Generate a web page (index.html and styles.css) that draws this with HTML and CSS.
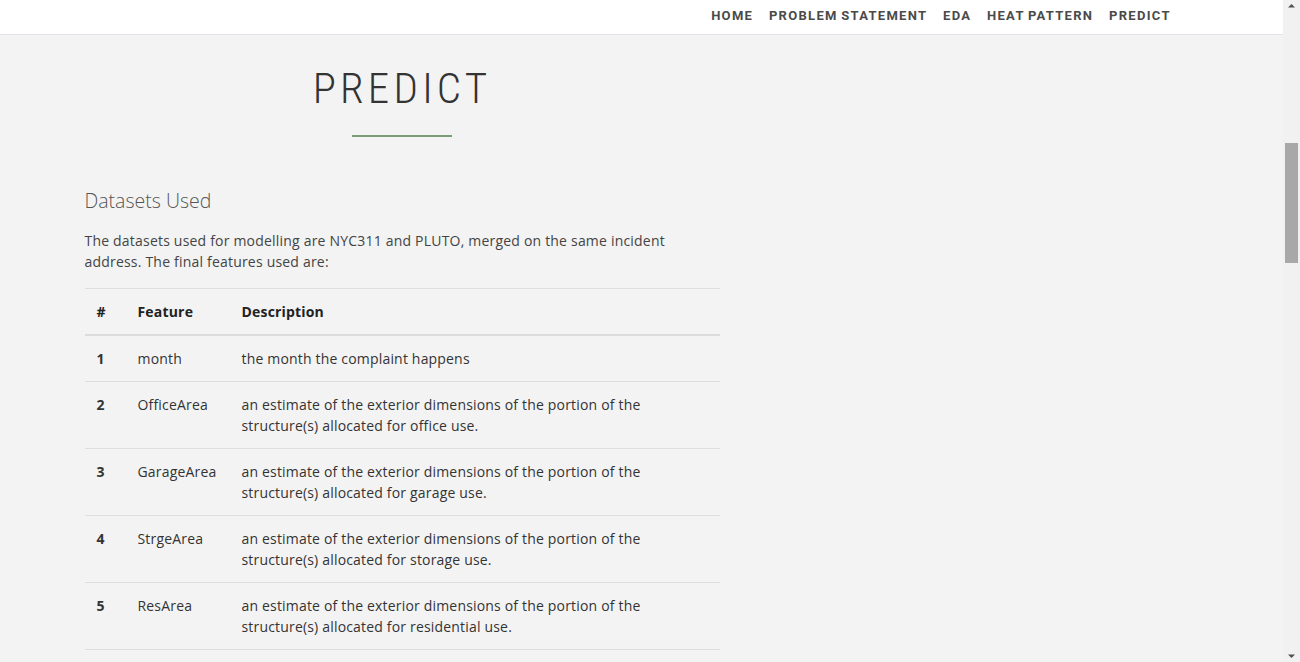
FILE: index.html
```html
<!DOCTYPE html>
<html lang="en">
<head>
<meta charset="utf-8">
<title>Predict</title>
<link rel="stylesheet" href="styles.css">
</head>
<body>
<div class="frame">
<div class="viewport">
<nav class="topnav">
  <div class="nav-inner">
    <a class="nav-link" href="#home">Home</a>
    <a class="nav-link" href="#problem">Problem Statement</a>
    <a class="nav-link" href="#eda">EDA</a>
    <a class="nav-link" href="#heat">Heat Pattern</a>
    <a class="nav-link" href="#predict">Predict</a>
  </div>
</nav>
<main class="page">
  <section class="section" id="predict">
    <div class="col">
      <header class="section-head">
        <h2 class="section-title">Predict</h2>
        <div class="title-rule"></div>
      </header>
      <h4 class="sub-title">Datasets Used</h4>
      <p class="lead-text">The datasets used for modelling are NYC311 and PLUTO, merged on the same incident address. The final features used are:</p>
      <table class="feat-table">
        <thead>
          <tr><th class="c-num">#</th><th class="c-feat">Feature</th><th>Description</th></tr>
        </thead>
        <tbody>
          <tr><td class="c-num b">1</td><td>month</td><td>the month the complaint happens</td></tr>
          <tr><td class="c-num b">2</td><td>OfficeArea</td><td>an estimate of the exterior dimensions of the portion of the structure(s) allocated for office use.</td></tr>
          <tr><td class="c-num b">3</td><td>GarageArea</td><td>an estimate of the exterior dimensions of the portion of the structure(s) allocated for garage use.</td></tr>
          <tr><td class="c-num b">4</td><td>StrgeArea</td><td>an estimate of the exterior dimensions of the portion of the structure(s) allocated for storage use.</td></tr>
          <tr><td class="c-num b">5</td><td>ResArea</td><td>an estimate of the exterior dimensions of the portion of the structure(s) allocated for residential use.</td></tr>
          <tr><td class="c-num b">6</td><td>NumFloors</td><td>the number of full and partial stories starting from the ground floor, for the tallest building on the tax lot.</td></tr>
          <tr><td class="c-num b">7</td><td>UnitsRes</td><td>the sum of residential units in all buildings on the tax lot.</td></tr>
          <tr><td class="c-num b">8</td><td>YearBuilt</td><td>the year construction of the building was completed.</td></tr>
        </tbody>
      </table>
    </div>
  </section>
</main>
</div>
<div class="rail" aria-hidden="true">
  <svg class="arrow" width="17" height="17" viewBox="0 0 17 17"><path d="M5 7.5 L8.5 4 L12 7.5 Z" fill="#505050"/></svg>
  <div class="track"><div class="thumb"></div></div>
  <svg class="arrow" width="17" height="17" viewBox="0 0 17 17"><path d="M5 9.5 L12 9.5 L8.5 13 Z" fill="#505050"/></svg>
</div>
</div>
</body>
</html>
```
FILE: styles.css
```css
* { box-sizing: border-box; }
html, body { margin: 0; padding: 0; height: 100%; overflow: hidden; }
body {
  background: #f3f3f3;
  font-family: "Open Sans", "Liberation Sans", sans-serif;
  font-size: 14px;
  line-height: 21px;
  color: #333;
}
.frame {
  display: flex;
  height: 100%;
}
.viewport {
  flex: 1;
  height: 100%;
  overflow-y: auto;
  scrollbar-width: none;
}
.rail {
  width: 17px;
  flex: none;
  display: flex;
  flex-direction: column;
  background: #f1f1f1;
}
.arrow { display: block; flex: none; }
.track { flex: 1; padding: 126px 2px 0; }
.thumb {
  height: 120px;
  background: #a8a8a8;
}
.topnav {
  position: sticky;
  top: 0;
  height: 35px;
  background: #fff;
  border-bottom: 1px solid #e2e2ea;
  z-index: 10;
}
.nav-inner {
  display: flex;
  justify-content: flex-end;
  gap: 17px;
  width: 1170px;
  margin: 0 auto;
  padding-right: 57px;
  height: 31px;
  align-items: center;
}
.nav-link {
  font-family: Roboto, sans-serif;
  font-weight: 700;
  font-size: 13px;
  letter-spacing: 1.3px;
  word-spacing: -1px;
  text-transform: uppercase;
  color: #4a4a4a;
  text-decoration: none;
  margin-right: -1.3px;
}
.page { padding-bottom: 60px; }
.section { width: 1170px; margin: 0 auto; }
.col { width: 635px; margin-left: 28px; }
.section-head { text-align: center; padding-top: 29px; }
.section-title {
  margin: 0;
  font-family: "Roboto Condensed", Roboto, sans-serif;
  font-stretch: 75%;
  font-weight: 300;
  font-size: 43px;
  line-height: 48px;
  letter-spacing: 4.2px;
  text-transform: uppercase;
  color: #333;
}
.title-rule {
  width: 100px;
  height: 2px;
  background: #7a9c7b;
  margin: 23px auto 0;
}
.sub-title {
  margin: 51px 0 0;
  font-weight: 300;
  font-size: 19.5px;
  line-height: 26px;
  color: #555;
}
.lead-text { margin: 16px 0 16px; color: #444; letter-spacing: 0.2px; }
.feat-table {
  width: 100%;
  border-collapse: collapse;
  border-top: 1px solid #dedede;
  letter-spacing: 0.18px;
}
.feat-table th, .feat-table td {
  text-align: left;
  vertical-align: top;
  padding: 12px 12px;
  border-bottom: 1px solid #dedede;
}
.feat-table th {
  font-weight: 700;
  color: #222;
  border-bottom: 2px solid #dcdcdc;
}
.feat-table td { color: #333; }
.c-num { width: 41px; }
.c-feat { width: 104px; }
.b { font-weight: 700; color: #222; }
```
